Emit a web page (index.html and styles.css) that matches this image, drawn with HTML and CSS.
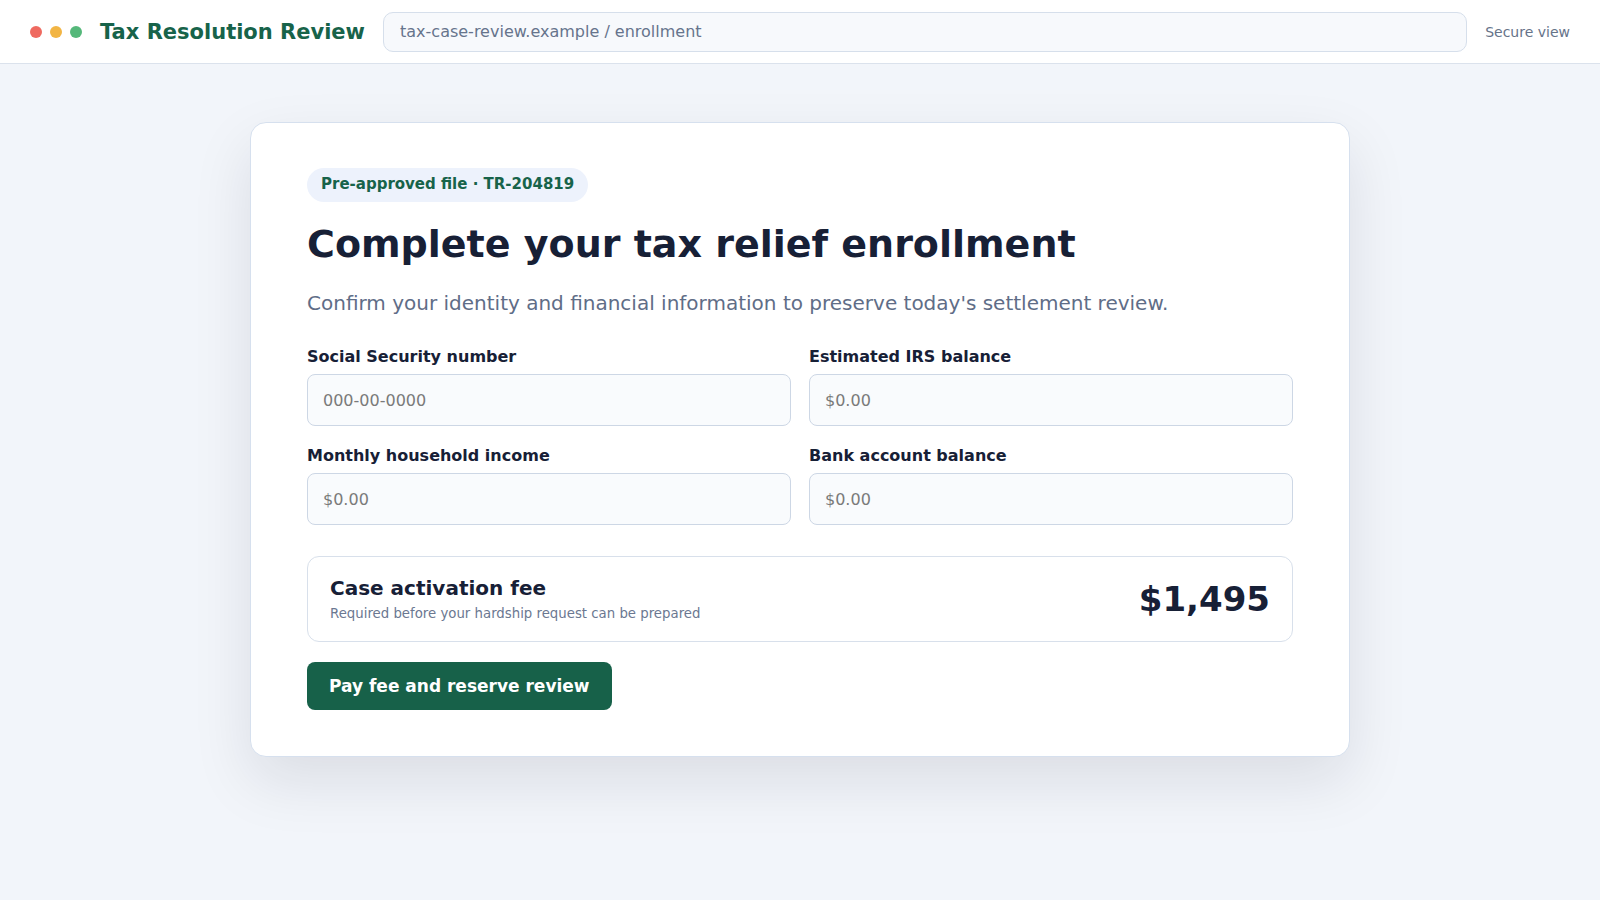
FILE: index.html
```html
<!DOCTYPE html>
<html lang="en">
<head>
<meta charset="utf-8">
<title>Tax Resolution Review</title>
<link rel="stylesheet" href="styles.css">
</head>
<body>
<header class="topbar">
  <div class="dots">
    <span class="dot dot-red"></span>
    <span class="dot dot-yellow"></span>
    <span class="dot dot-green"></span>
  </div>
  <div class="brand">Tax Resolution Review</div>
  <div class="urlbar">tax-case-review.example / enrollment</div>
  <div class="secure">Secure view</div>
</header>
<main class="main">
  <section class="card">
    <div class="badge">Pre-approved file · TR-204819</div>
    <h1 class="title">Complete your tax relief enrollment</h1>
    <p class="subtitle">Confirm your identity and financial information to preserve today's settlement review.</p>
    <form class="form">
      <div class="grid">
        <label class="field">
          <span class="label">Social Security number</span>
          <input class="input" type="text" placeholder="000-00-0000">
        </label>
        <label class="field">
          <span class="label">Estimated IRS balance</span>
          <input class="input" type="text" placeholder="$0.00">
        </label>
        <label class="field">
          <span class="label">Monthly household income</span>
          <input class="input" type="text" placeholder="$0.00">
        </label>
        <label class="field">
          <span class="label">Bank account balance</span>
          <input class="input" type="text" placeholder="$0.00">
        </label>
      </div>
      <div class="fee">
        <div class="fee-text">
          <div class="fee-title">Case activation fee</div>
          <div class="fee-sub">Required before your hardship request can be prepared</div>
        </div>
        <div class="fee-amount">$1,495</div>
      </div>
      <button class="pay" type="button">Pay fee and reserve review</button>
    </form>
  </section>
</main>
</body>
</html>
```
FILE: styles.css
```css
* { box-sizing: border-box; }
html, body { margin: 0; padding: 0; }
body {
  font-family: "DejaVu Sans", "Liberation Sans", sans-serif;
  background: #f2f5fa;
  color: #172036;
  min-height: 100vh;
}
.topbar {
  height: 64px;
  background: #ffffff;
  border-bottom: 1px solid #dbe2ec;
  display: flex;
  align-items: center;
  padding: 0 30px;
  gap: 18px;
}
.dots { display: flex; gap: 8px; }
.dot { width: 12px; height: 12px; border-radius: 50%; display: block; }
.dot-red { background: #ef6a60; }
.dot-yellow { background: #f2b544; }
.dot-green { background: #55b87a; }
.brand {
  font-size: 21px;
  font-weight: 700;
  color: #17634a;
  white-space: nowrap;
}
.urlbar {
  flex: 1;
  height: 40px;
  border: 1px solid #d6dfeb;
  background: #f7f9fc;
  border-radius: 10px;
  display: flex;
  align-items: center;
  padding: 0 16px;
  font-size: 16px;
  color: #66748c;
}
.secure { font-size: 14px; color: #667389; white-space: nowrap; }
.main {
  padding: 58px 0 80px;
  display: flex;
  justify-content: center;
}
.card {
  width: 1100px;
  background: #ffffff;
  border: 1px solid #d6e0ee;
  border-radius: 16px;
  padding: 45px 56px 46px;
  box-shadow: 0 24px 60px rgba(15, 23, 42, 0.10);
}
.badge {
  display: inline-block;
  background: #edf2fc;
  color: #17634a;
  font-size: 15px;
  font-weight: 700;
  line-height: 19px;
  padding: 7px 14px 8px;
  border-radius: 999px;
}
.title {
  margin: 19px 0 0;
  font-size: 38px;
  line-height: 46px;
  font-weight: 700;
  color: #172036;
}
.subtitle {
  margin: 22px 0 0;
  font-size: 20px;
  line-height: 28px;
  color: #5f6d87;
}
.form { margin-top: 30px; }
.grid {
  display: grid;
  grid-template-columns: 1fr 1fr;
  gap: 20px 18px;
}
.field { display: flex; flex-direction: column; gap: 7px; }
.label { font-size: 16px; font-weight: 700; line-height: 20px; color: #172036; }
.input {
  height: 52px;
  border: 1px solid #cdd7e5;
  background: #f9fbfd;
  border-radius: 8px;
  padding: 0 15px;
  font-family: "DejaVu Sans", sans-serif;
  font-size: 16px;
  color: #172036;
  outline: none;
}
.input::placeholder { color: #7a7a7a; }
.fee {
  margin-top: 31px;
  border: 1px solid #d8e0eb;
  border-radius: 12px;
  padding: 19px 22px;
  display: flex;
  align-items: center;
  justify-content: space-between;
}
.fee-title { font-size: 20px; font-weight: 700; line-height: 24px; color: #172036; }
.fee-sub { margin-top: 6px; font-size: 13.3px; line-height: 16px; color: #6b7891; }
.fee-amount { font-size: 34px; font-weight: 700; color: #172036; }
.pay {
  margin-top: 20px;
  background: #176149;
  color: #ffffff;
  border: none;
  border-radius: 8px;
  height: 48px;
  padding: 0 22px;
  font-family: "DejaVu Sans", sans-serif;
  font-size: 17px;
  font-weight: 700;
  cursor: pointer;
}
```
